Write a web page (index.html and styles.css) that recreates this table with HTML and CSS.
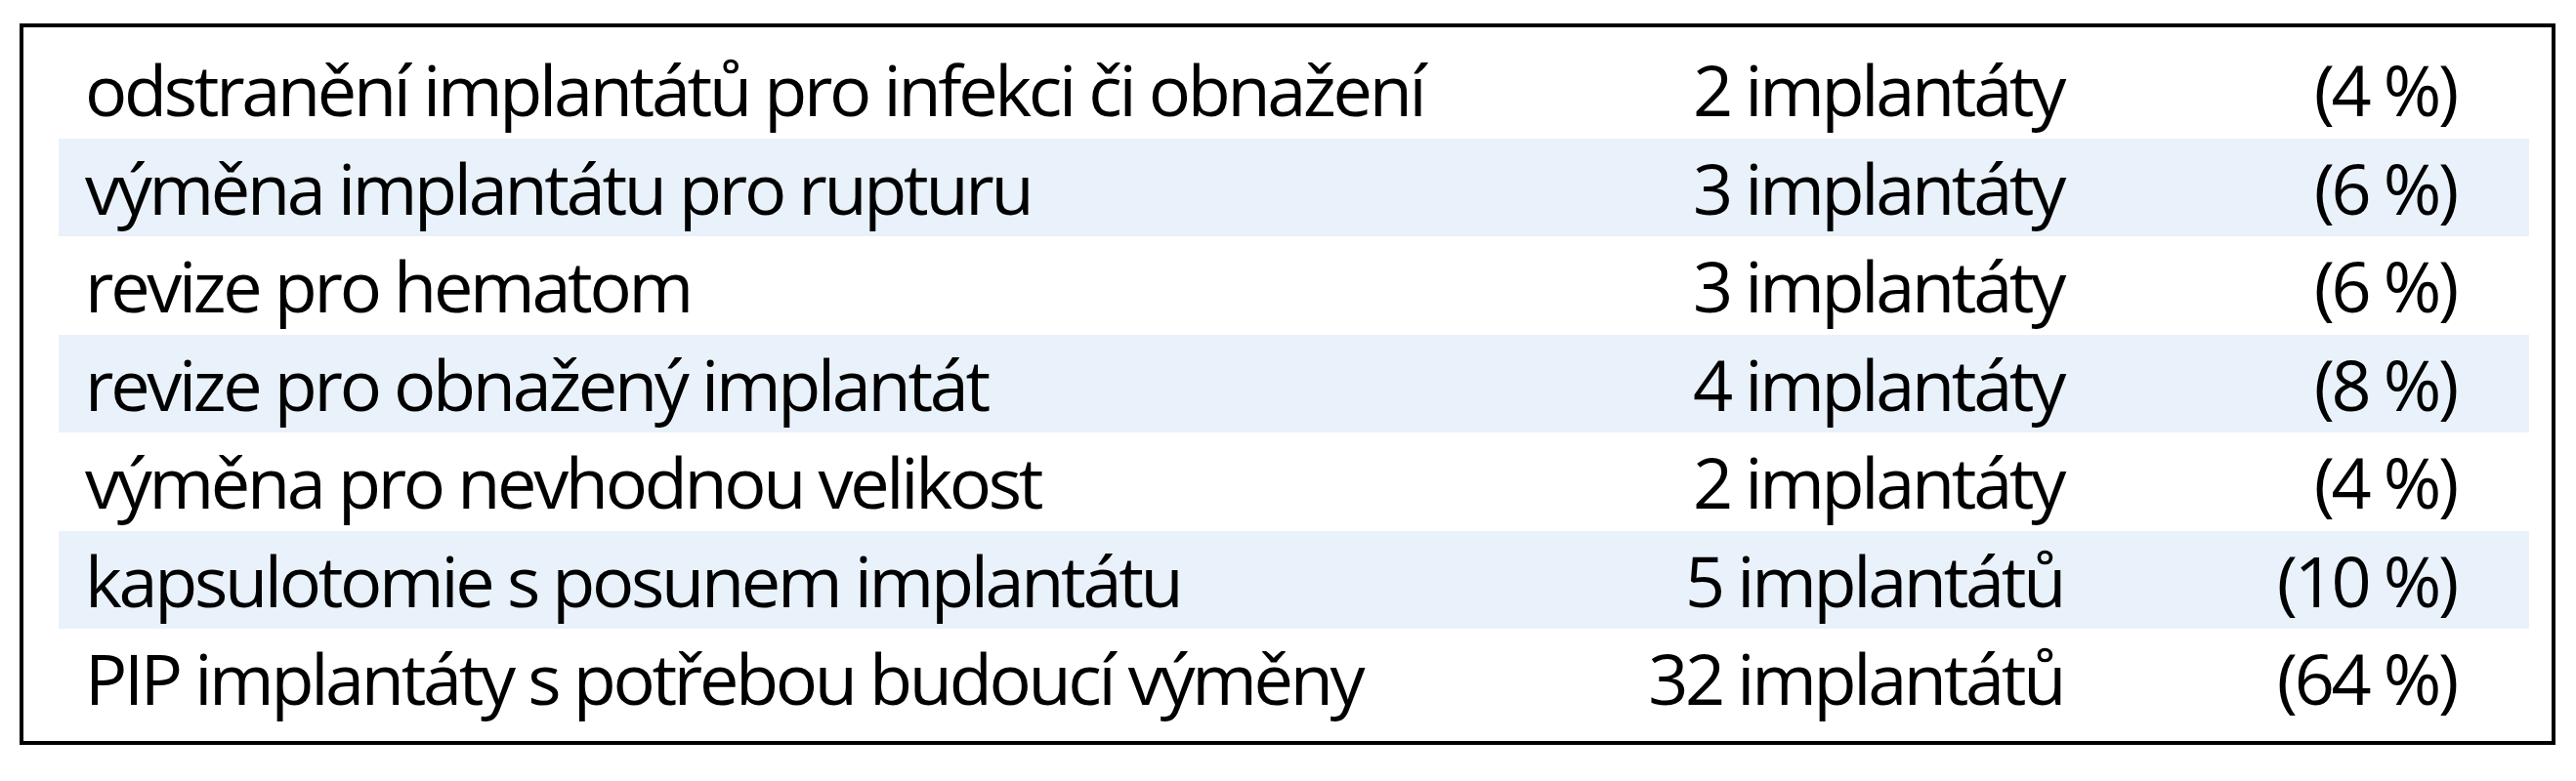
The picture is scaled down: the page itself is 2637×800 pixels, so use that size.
FILE: index.html
```html
<!DOCTYPE html>
<html lang="cs">
<head>
<meta charset="utf-8">
<title>Komplikace</title>
<link rel="stylesheet" href="styles.css">
</head>
<body>
<div class="box">
  <div class="row"><span class="c1">odstranění implantátů pro infekci či obnažení</span><span class="c2">2 implantáty</span><span class="c3">(4 %)</span></div>
  <div class="row shade"><span class="c1">výměna implantátu pro rupturu</span><span class="c2">3 implantáty</span><span class="c3">(6 %)</span></div>
  <div class="row"><span class="c1">revize pro hematom</span><span class="c2">3 implantáty</span><span class="c3">(6 %)</span></div>
  <div class="row shade"><span class="c1">revize pro obnažený implantát</span><span class="c2">4 implantáty</span><span class="c3">(8 %)</span></div>
  <div class="row"><span class="c1">výměna pro nevhodnou velikost</span><span class="c2">2 implantáty</span><span class="c3">(4 %)</span></div>
  <div class="row shade"><span class="c1">kapsulotomie s posunem implantátu</span><span class="c2">5 implantátů</span><span class="c3">(10 %)</span></div>
  <div class="row"><span class="c1">PIP implantáty s potřebou budoucí výměny</span><span class="c2">32 implantátů</span><span class="c3">(64 %)</span></div>
</div>
</body>
</html>
```
FILE: styles.css
```css
html, body {
  margin: 0;
  padding: 0;
  background: #ffffff;
}
body {
  font-family: "Open Sans", "Liberation Sans", sans-serif;
  color: #000000;
}
.box {
  box-sizing: border-box;
  margin: 24px 0 0 20px;
  width: 2596px;
  height: 739px;
  border: 4px solid #000000;
  padding: 13px 23px 0 36px;
}
.row {
  display: grid;
  grid-template-columns: 1413px 612px 402px;
  height: 100.5px;
  align-items: center;
  padding: 0 75px 0 27px;
  font-size: 72px;
  letter-spacing: -3.3px;
  line-height: 100.5px;
  white-space: nowrap;
}
.shade {
  background: #e9f1fa;
}
.c1 {
  text-align: left;
}
.c2, .c3 {
  text-align: right;
}
```
